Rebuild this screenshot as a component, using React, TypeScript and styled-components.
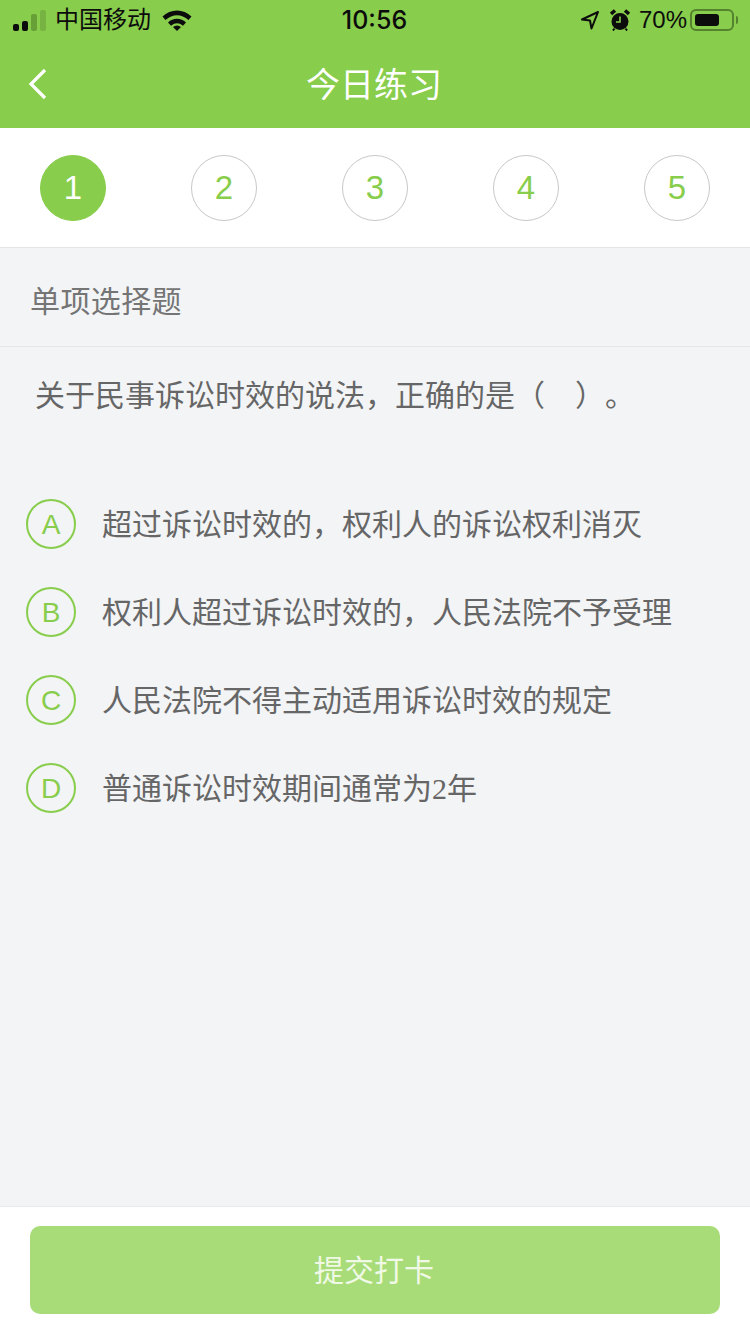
import styled, { createGlobalStyle } from 'styled-components'

const steps = [1, 2, 3, 4, 5]

const options = [
	{ key: 'A', text: '超过诉讼时效的，权利人的诉讼权利消灭' },
	{ key: 'B', text: '权利人超过诉讼时效的，人民法院不予受理' },
	{ key: 'C', text: '人民法院不得主动适用诉讼时效的规定' },
	{ key: 'D', text: '普通诉讼时效期间通常为', tail: '2', end: '年' },
]

export default function App() {
	return (
		<Page>
			<GlobalStyle />
			<Header>
				<StatusBar>
					<StatusLeft>
						<Signal>
							<SignalBar $h={7} $tone="#0c0c0c" />
							<SignalBar $h={10} $tone="#0c0c0c" />
							<SignalBar $h={17} $tone="#68a038" />
							<SignalBar $h={21} $tone="#76b343" />
						</Signal>
						<Carrier>中国移动</Carrier>
						<svg width="30" height="22" viewBox="0 0 30 22">
							<path d="M.5 7.500C8.500 -.5 21.500 -.5 29.500 7.500L26.500 11C19.500 4.500 10.500 4.500 3.500 11Z" fill="#0c0c0c" />
							<path d="M6 13.500C11 8.500 19 8.500 24 13.500L21 16.800C17 13.500 13 13.500 9 16.800Z" fill="#0c0c0c" />
							<path d="M11 18C13.500 16 16.500 16 19 18L15 22Z" fill="#0c0c0c" />
						</svg>
					</StatusLeft>
					<Clock>10:56</Clock>
					<StatusRight>
						<svg width="20" height="20" viewBox="0 0 20 20">
							<path d="M18 2L2 9.500L10 10.500L11.500 18.500Z" fill="none" stroke="#0c0c0c" strokeWidth="2" strokeLinejoin="round" />
						</svg>
						<AlarmIcon width="20" height="22" viewBox="0 0 20 22">
							<circle cx="10" cy="12.500" r="8.500" fill="#0c0c0c" />
							<path d="M10 7.500V13H6" fill="none" stroke="#88cd4b" strokeWidth="1.600" />
							<path d="M1 5L5 1.500M19 5L15 1.500" stroke="#0c0c0c" strokeWidth="3.400" />
							<path d="M4.500 19.500L3 21.500M15.500 19.500L17 21.500" stroke="#0c0c0c" strokeWidth="2" />
						</AlarmIcon>
						<Percent>70%</Percent>
						<Battery>
							<BatteryLevel />
						</Battery>
						<BatteryCap />
					</StatusRight>
				</StatusBar>
				<NavBar>
					<BackButton>
						<svg width="22" height="34" viewBox="0 0 22 34">
							<path d="M19 3L5 17L19 31" fill="none" stroke="#fff" strokeWidth="3.200" />
						</svg>
					</BackButton>
					<Title>今日练习</Title>
				</NavBar>
			</Header>

			<StepBar>
				{steps.map((n) => (
					<Step key={n} $active={n === 1}>
						{n}
					</Step>
				))}
			</StepBar>

			<Main>
				<SectionLabel>单项选择题</SectionLabel>
				<Question>
					关于民事诉讼时效的说法，正确的是（<BlankGap />）。
				</Question>
				<OptionList>
					{options.map((o) => (
						<Option key={o.key}>
							<OptionKey>{o.key}</OptionKey>
							<OptionText>
								{o.text}
								{o.tail && <SerifDigit>{o.tail}</SerifDigit>}
								{o.end}
							</OptionText>
						</Option>
					))}
				</OptionList>
			</Main>

			<Footer>
				<SubmitButton>提交打卡</SubmitButton>
			</Footer>
		</Page>
	)
}

const GlobalStyle = createGlobalStyle`
	html, body {
		margin: 0;
		padding: 0;
	}
	* {
		box-sizing: border-box;
	}
	body {
		font-family: 'Liberation Sans', 'Noto Sans CJK SC', sans-serif;
		text-spacing-trim: space-all;
	}
`
const Page = styled.div`
	width: 750px;
	height: 1334px;
	display: flex;
	flex-direction: column;
	background: #f3f4f6;
	overflow: hidden;
`
const Header = styled.header`
	height: 128px;
	background: #88cd4b;
`
const StatusBar = styled.div`
	height: 40px;
	padding: 0 12px 0 13px;
	display: flex;
	align-items: center;
	justify-content: space-between;
	color: #0c0c0c;
`
const StatusLeft = styled.div`
	width: 240px;
	display: flex;
	align-items: center;
`
const Signal = styled.div`
	display: flex;
	align-items: flex-end;
	gap: 3px;
	height: 21px;
	margin-right: 9px;
`
const SignalBar = styled.span<{ $h: number; $tone: string }>`
	width: 6px;
	height: ${(p) => p.$h}px;
	border-radius: 2px;
	background: ${(p) => p.$tone};
`
const Carrier = styled.span`
	font-size: 24px;
	line-height: 30px;
	margin-right: 11px;
`
const Clock = styled.span`
	font-family: Inter, 'Liberation Sans', sans-serif;
	font-size: 25px;
	font-weight: 500;
	margin-right: 2px;
`
const StatusRight = styled.div`
	width: 240px;
	display: flex;
	align-items: center;
	justify-content: flex-end;
	gap: 6px;
`
const AlarmIcon = styled.svg`
	margin: 0 3px 0 4px;
`
const Percent = styled.span`
	font-size: 24px;
	margin-right: -3px;
`
const Battery = styled.div`
	width: 44px;
	height: 22px;
	padding: 3px;
	border: 2px solid #55822f;
	border-radius: 6px;
`
const BatteryLevel = styled.div`
	width: 70%;
	height: 100%;
	border-radius: 3px;
	background: #0c0c0c;
`
const BatteryCap = styled.div`
	width: 2px;
	height: 8px;
	margin-left: -4px;
	border-radius: 0 2px 2px 0;
	background: #55822f;
`
const NavBar = styled.div`
	position: relative;
	height: 88px;
	display: flex;
	align-items: center;
	justify-content: center;
	padding-bottom: 4px;
`
const BackButton = styled.div`
	position: absolute;
	left: 26px;
	top: 27px;
	line-height: 0;
`
const Title = styled.h1`
	margin: 0 2px 0 0;
	font-size: 34px;
	font-weight: 400;
	color: #fff;
`
const StepBar = styled.div`
	height: 120px;
	padding: 27px 40px 0;
	display: flex;
	justify-content: space-between;
	background: #fff;
	border-bottom: 1px solid #e4e5e7;
`
const Step = styled.div<{ $active?: boolean }>`
	width: 66px;
	height: 66px;
	display: flex;
	align-items: center;
	justify-content: center;
	border-radius: 50%;
	font-size: 33px;
	color: ${(p) => (p.$active ? '#fff' : '#88cd4b')};
	background: ${(p) => (p.$active ? '#88cd4b' : '#fff')};
	border: 1px solid ${(p) => (p.$active ? '#88cd4b' : '#c8c8c8')};
`
const Main = styled.main`
	flex: 1;
`
const SectionLabel = styled.div`
	height: 99px;
	padding: 3px 30px 0;
	display: flex;
	align-items: center;
	font-size: 30px;
	letter-spacing: 0.4px;
	color: #757575;
	border-bottom: 1px solid #e6e7e9;
`
const Question = styled.p`
	margin: 0;
	padding: 28px 35px 0;
	font-size: 30px;
	line-height: 42px;
	color: #666;
`
const BlankGap = styled.span`
	display: inline-block;
	width: 30px;
`
const OptionList = styled.ul`
	list-style: none;
	margin: 0;
	padding: 63px 0 0 26px;
`
const Option = styled.li`
	height: 88px;
	display: flex;
	align-items: center;
`
const OptionKey = styled.span`
	width: 50px;
	height: 50px;
	margin-right: 26px;
	display: flex;
	align-items: center;
	justify-content: center;
	border: 2px solid #88cd4b;
	border-radius: 50%;
	font-size: 28px;
	padding-top: 2px;
	color: #88cd4b;
`
const OptionText = styled.span`
	font-size: 30px;
	color: #666;
	margin-bottom: 4px;
`
const SerifDigit = styled.span`
	font-family: 'Liberation Serif', serif;
`
const Footer = styled.footer`
	height: 128px;
	padding: 19px 30px 0;
	background: #fff;
	border-top: 1px solid #e8e9eb;
`
const SubmitButton = styled.button`
	width: 100%;
	height: 88px;
	padding: 0 2px 4px 0;
	border: 0;
	border-radius: 10px;
	background: #a8dc78;
	color: #f0f9e6;
	font-family: inherit;
	font-size: 30px;
`
